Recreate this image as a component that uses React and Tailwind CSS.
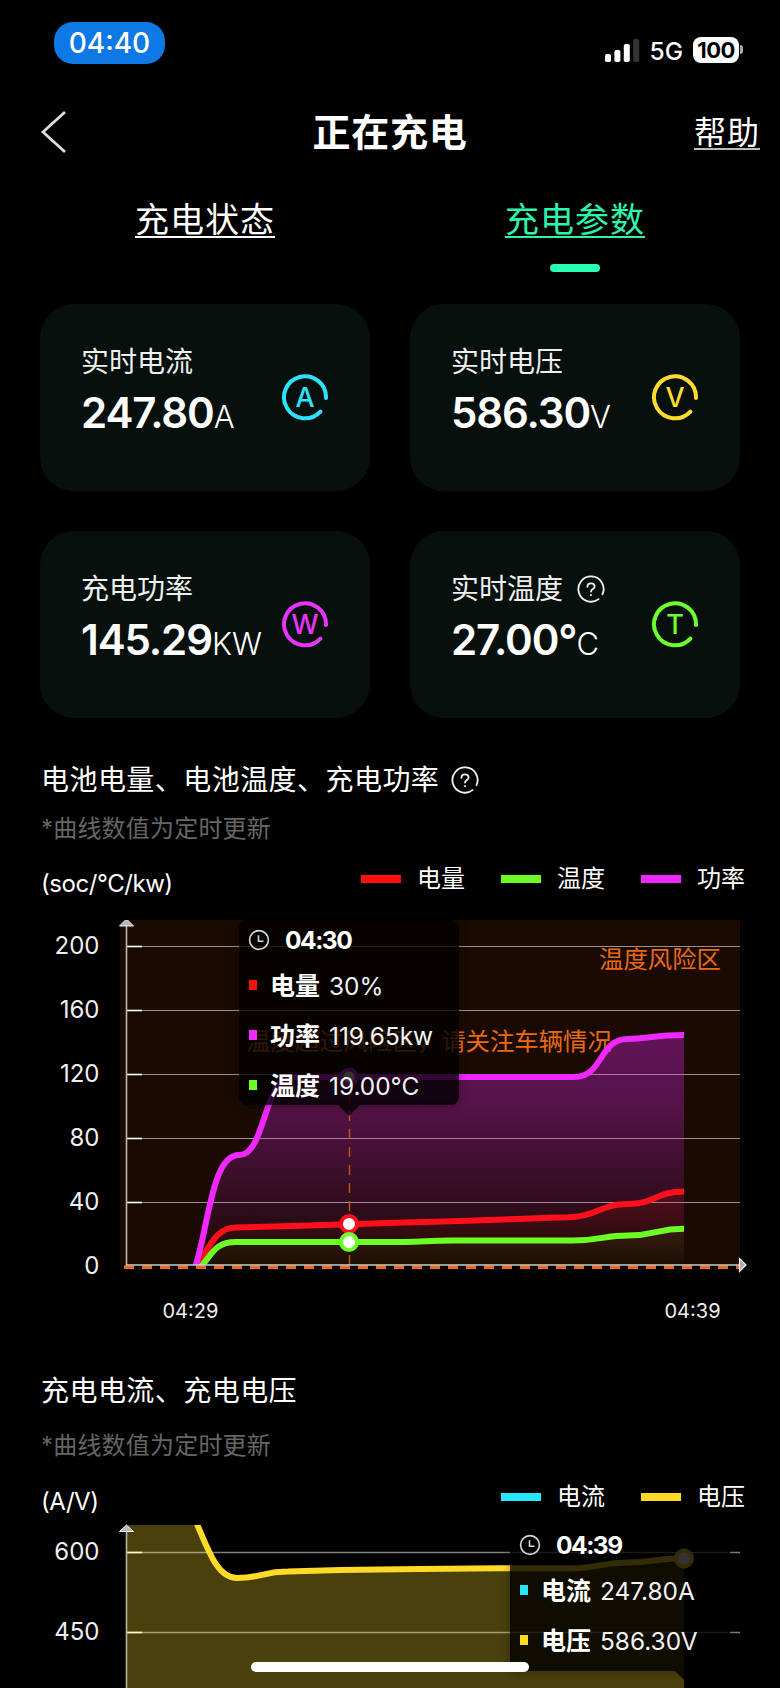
/**
 * App.jsx
 * ─────────────────────────────────────────────────────────────────────────────
 * Charging page: live parameters, battery chart, current / voltage chart
 * ─────────────────────────────────────────────────────────────────────────────
 */

const METRICS = [
  { label: "实时电流", value: "247.80", unit: "A", letter: "A", color: "#2be3fb" },
  { label: "实时电压", value: "586.30", unit: "V", letter: "V", color: "#fddc2c" },
  { label: "充电功率", value: "145.29", unit: "KW", letter: "W", color: "#e833fa" },
  { label: "实时温度", value: "27.00°", unit: "C", letter: "T", color: "#6dff2e", help: true },
];

const BATTERY_LEGEND = [
  { label: "电量", color: "bg-[#fd1008]" },
  { label: "温度", color: "bg-[#6cff26]" },
  { label: "功率", color: "bg-[#ee28ff]" },
];

const CURRENT_LEGEND = [
  { label: "电流", color: "bg-[#27e6ff]" },
  { label: "电压", color: "bg-[#ffdb27]" },
];

// Curves, in the coordinates of each chart's viewBox
const POWER = "M188 365 C209 325 208 235 239 235 C266 235 263 157 293 157 H574 C604 157 598 119 628 119 C646 119 656 115 684 115";
const SOC = "M189 357 C208 334 213 307 236 307.5 L292 306 L348 304.3 L404 302.5 L460 301 L516 299 L556 297.5 C600 298.5 597 284 628 284 C655 284 656 271.5 684 271.5";
const TEMP = "M194 355 C212 336 213 322 236 322 H404 C424 322 428 320.5 452 320.5 H572 C600 320.5 604 315.5 628 315.5 C656 315.5 656 308.8 684 308.8";
const VOLTAGE = "M126 -40 H170 C202 -10 206 58 237 58 C262 58 262 51.5 288 51.5 L340 50 L420 49 L500 48.2 H572 C596 48.2 604 42.5 628 42.5 C652 42.5 656 38.5 684 38.3";

// ── Icons ────────────────────────────────────────────────────────────────────
function HelpIcon() {
  return (
    <svg viewBox="0 0 28 28" className="h-7 w-7 flex-shrink-0" fill="none" stroke="#f2f2f2" strokeWidth="1.8" strokeLinecap="round">
      <path d="M25.5 19.2 A12.6 12.6 0 1 0 21.6 24.1" />
      <path d="M10.4 11.8 C10.4 7.2 17.6 7.2 17.6 11.8 C17.6 14.2 14 14 14 16.6" />
      <path d="M14 20v.2" />
    </svg>
  );
}

function ClockIcon() {
  return (
    <svg viewBox="0 0 22 22" className="h-[22px] w-[22px]" fill="none" stroke="#d8d8d8" strokeWidth="1.6">
      <circle cx="11" cy="11" r="9.4" />
      <path d="M10.5 6.2 V12.2 H15.5" />
    </svg>
  );
}

function MetricIcon({ letter, color }) {
  return (
    <div className="relative flex h-12 w-12 items-center justify-center">
      <svg viewBox="0 0 48 48" className="absolute inset-0 h-12 w-12" fill="none" stroke={color} strokeWidth="4" strokeLinecap="round">
        <path d="M45 25 A21 21 0 1 0 39.4 38.6" />
      </svg>
      <span className="text-[27px] font-medium leading-none" style={{ color }}>{letter}</span>
    </div>
  );
}

// ── Page pieces ──────────────────────────────────────────────────────────────
function StatusBar() {
  return (
    <div className="flex h-[84px] items-start justify-between pl-[54px] pr-[37px] pt-[22px]">
      <div className="flex h-[42px] w-[111px] items-center justify-center rounded-[19px] bg-[#0e78e4] text-[28px] font-medium">04:40</div>
      <div className="mt-[14px] flex h-[27px] items-center">
        <svg viewBox="0 0 35 23" className="mt-px h-[23px] w-[35px]" fill="#fff">
          <rect x="0" y="15" width="6" height="8" rx="1.8" />
          <rect x="9.4" y="11" width="6" height="12" rx="1.8" />
          <rect x="18.8" y="5" width="6" height="18" rx="1.8" />
          <rect x="28.2" y="0" width="6" height="23" rx="1.8" fill="#343434" />
        </svg>
        <span className="ml-[10px] mt-[3px] text-[24.5px] font-medium leading-none">5G</span>
        <div className="ml-[10px] flex h-[26px] w-[46px] items-center justify-center rounded-[8px] bg-white text-[22px] font-bold leading-none tracking-tight text-black">100</div>
        <div className="ml-px h-[9px] w-[3px] rounded-r-full bg-[#aaa]" />
      </div>
    </div>
  );
}

function MetricCard({ label, value, unit, letter, color, help }) {
  return (
    <div className="flex h-[187px] justify-between rounded-[34px] bg-[#08100e] pl-[41px] pr-[41px]">
      <div className="pt-[38px]">
        <div className="flex h-[40px] items-center text-[28px] text-[#edf0ef]">
          {label}
          {help && <span className="ml-[14px]"><HelpIcon /></span>}
        </div>
        <div className="flex items-baseline whitespace-nowrap pt-[5px] leading-[52px]">
          <span className="text-[42px] font-semibold tracking-[-1.1px]">{value}</span>
          <span className="text-[31px] font-light">{unit}</span>
        </div>
      </div>
      <div className="-ml-5 pt-[69px]">
        <MetricIcon letter={letter} color={color} />
      </div>
    </div>
  );
}

function Legend({ items }) {
  return (
    <div className="flex gap-9">
      {items.map((item) => (
        <div key={item.label} className="flex w-[104px] items-center justify-between">
          <span className={`h-2 w-10 ${item.color}`} />
          <span className="text-[24px] leading-[30px]">{item.label}</span>
        </div>
      ))}
    </div>
  );
}

function Tooltip({ time, rows }) {
  return (
    <div className="px-[9px] pt-[9px]">
      <div className="flex h-[22px] items-center">
        <ClockIcon />
        <span className="ml-[15px] text-[24.5px] font-bold leading-none tracking-[-0.06em]">{time}</span>
      </div>
      {rows.map((row) => (
        <div key={row.label} className="flex h-[50px] items-center whitespace-nowrap pl-px pt-[20px] leading-[30px]">
          <span className={`mb-[3px] h-[10px] w-2 ${row.color}`} />
          <span className="ml-[13px] text-[25px] font-bold">{row.label}</span>
          <span className="ml-[9px] text-[24.4px] text-[#f3f3f3]">{row.value}</span>
        </div>
      ))}
    </div>
  );
}

function BatteryChart() {
  return (
    <div className="relative h-[430px]">
      <svg viewBox="0 0 780 430" className="h-[430px] w-[780px]">
        <defs>
          <clipPath id="batteryPlot"><rect x="120" y="0" width="564" height="345" /></clipPath>
          <linearGradient id="powerFill" gradientUnits="userSpaceOnUse" x1="0" y1="115" x2="0" y2="345">
            <stop offset="0" stopColor="#ee28ff" stopOpacity="0.34" />
            <stop offset="0.3" stopColor="#ee28ff" stopOpacity="0.28" />
            <stop offset="1" stopColor="#ee28ff" stopOpacity="0" />
          </linearGradient>
          <linearGradient id="socFill" gradientUnits="userSpaceOnUse" x1="0" y1="271" x2="0" y2="345">
            <stop offset="0" stopColor="#fd1008" stopOpacity="0.14" />
            <stop offset="1" stopColor="#fd1008" stopOpacity="0" />
          </linearGradient>
          <linearGradient id="tempFill" gradientUnits="userSpaceOnUse" x1="0" y1="308" x2="0" y2="345">
            <stop offset="0" stopColor="#6cff26" stopOpacity="0.06" />
            <stop offset="1" stopColor="#6cff26" stopOpacity="0.02" />
          </linearGradient>
        </defs>

        <rect x="120" y="0" width="620" height="345" fill="#1a0a02" />
        {[200, 160, 120, 80, 40, 0].map((tick, i) => (
          <g key={tick}>
            {tick > 0 && <path d={`M126 ${26.5 + i * 64}H740`} stroke="#9d918b" strokeWidth="1.2" />}
            {tick > 0 && <path d={`M126 ${26.5 + i * 64}H142`} stroke="#fff" strokeWidth="1.6" />}
            <text x="99.5" y={34 + i * 64} textAnchor="end" fontSize="24" fill="#efefef">{tick}</text>
          </g>
        ))}
        <path d="M126.5 4V345" stroke="#bdb8b5" strokeWidth="1.6" />
        <path d="M126.5 -1L119.5 6H133.5Z" fill="#b9b9b9" stroke="#eee" strokeWidth="1" />
        <text x="599" y="48" fontSize="24.4" fill="#e96a12">温度风险区</text>
        <text x="246" y="129.5" fontSize="24.4" fill="#e96a12">温度超过风险区，请关注车辆情况</text>

        <g clipPath="url(#batteryPlot)" fill="none" strokeWidth="6">
          <path d={`${POWER}V345H180Z`} fill="url(#powerFill)" />
          <path d={`${SOC}V345H180Z`} fill="url(#socFill)" />
          <path d={`${TEMP}V345H180Z`} fill="url(#tempFill)" />
          <path d={SOC} stroke="#ff0f1b" />
          <path d={TEMP} stroke="#6cff26" />
          <path d={POWER} stroke="#ee28ff" />
        </g>

        {/* Selected time */}
        <path d="M349.5 345V156" stroke="#c4561c" strokeWidth="1.4" strokeDasharray="10 8" />
        <circle cx="349" cy="157" r="7.5" fill="#fff" stroke="#ee28ff" strokeWidth="4" />
        <circle cx="349" cy="304" r="8" fill="#fff" stroke="#ff0f1b" strokeWidth="4" />
        <circle cx="349" cy="322" r="8" fill="#fff" stroke="#6cff26" strokeWidth="4" />

        {/* Time axis */}
        <path d="M124 347.2H740" stroke="#ec6917" strokeWidth="3.8" strokeDasharray="10 8" />
        <path d="M126 345H740" stroke="#d0cbc8" strokeWidth="1.4" />
        <path d="M739.5 338.5V351.5L746 345Z" fill="#aaa" stroke="#f2f2f2" strokeWidth="1.2" />
        <text x="162.5" y="398" fontSize="20" fill="#eee">04:29</text>
        <text x="664.5" y="398" fontSize="20" fill="#eee">04:39</text>

        <path d="M338 185H360L349 196Z" fill="#000" fillOpacity="0.75" />
      </svg>
      <div className="absolute left-[239px] top-0 h-[185px] w-[220px] rounded-lg bg-black/80 shadow-[0_1px_8px_rgba(0,0,0,0.3)]">
        <Tooltip
          time="04:30"
          rows={[
            { label: "电量", value: "30%", color: "bg-[#fd1008]" },
            { label: "功率", value: "119.65kw", color: "bg-[#ee28ff]" },
            { label: "温度", value: "19.00°C", color: "bg-[#6cff26]" },
          ]}
        />
      </div>
    </div>
  );
}

function CurrentChart() {
  return (
    <div className="relative h-[163px]">
      <svg viewBox="0 0 780 168" className="h-[168px] w-[780px]">
        <defs>
          <clipPath id="currentPlot"><rect x="126" y="5" width="558" height="163" /></clipPath>
        </defs>
        <path d={`${VOLTAGE}V180H126Z`} fill="#4a400b" clipPath="url(#currentPlot)" />
        {[600, 450].map((tick, i) => (
          <g key={tick}>
            <path d={`M126 ${32.5 + i * 80}H740`} stroke="#fff" strokeOpacity="0.5" strokeWidth="1.3" />
            <path d={`M126 ${32.5 + i * 80}H142`} stroke="#fffbd0" strokeWidth="1.6" />
            <text x="99.5" y={40 + i * 80} textAnchor="end" fontSize="24" fill="#efefef">{tick}</text>
          </g>
        ))}
        <path d={VOLTAGE} fill="none" stroke="#ffdb27" strokeWidth="6" clipPath="url(#currentPlot)" />
        <circle cx="684" cy="38.5" r="8" fill="#fff" stroke="#ffdb27" strokeWidth="4" />
        <path d="M126.5 10V168" stroke="#b9b59e" strokeWidth="1.6" />
        <path d="M126.5 5L119.5 11.5H133.5Z" fill="#b9b9b9" stroke="#eee" strokeWidth="1" />
        <path d="M675 151H693L684 160Z" fill="#000" fillOpacity="0.78" />
      </svg>
      <div className="absolute left-[510px] top-[5px] h-[146px] w-[220px] rounded-sm bg-black/80 shadow-[0_1px_8px_rgba(0,0,0,0.3)]">
        <Tooltip
          time="04:39"
          rows={[
            { label: "电流", value: "247.80A", color: "bg-[#27e6ff]" },
            { label: "电压", value: "586.30V", color: "bg-[#ffdb27]" },
          ]}
        />
      </div>
    </div>
  );
}

export default function App() {
  return (
    <div className="relative h-[1688px] w-[780px] overflow-hidden bg-black font-['Inter','Noto_Sans_CJK_SC',sans-serif] text-white">
      <StatusBar />

      {/* ── Header ─────────────────────────────────────────────────────── */}
      <header className="grid h-[96px] grid-cols-3 items-center pl-[40px] pr-[20px]">
        <svg viewBox="0 0 28 44" className="h-11 w-7" fill="none" stroke="#ddd" strokeWidth="2.8">
          <path d="M25 2 L3 22 L25 42" />
        </svg>
        <h1 className="-ml-[20px] text-center text-[38px] font-bold tracking-[0.7px]">正在充电</h1>
        <a className="justify-self-end border-b-2 border-[#bbb] pt-1 text-[32px] leading-[30px] tracking-[1px]">帮助</a>
      </header>

      {/* ── Tabs ───────────────────────────────────────────────────────── */}
      <nav className="grid h-[124px] grid-cols-2 px-[20px] pt-[20px] text-[34px] leading-[33px] tracking-[1px]">
        <div className="flex flex-col items-center">
          <a className="border-b-2 border-white pt-[3px]">充电状态</a>
        </div>
        <div className="flex flex-col items-center text-[#2df5ab]">
          <a className="border-b-2 border-[#2df5ab] pt-[3px]">充电参数</a>
          <span className="mt-[26px] h-2 w-[50px] rounded-full bg-[#2bffb3]" />
        </div>
      </nav>

      {/* ── Live values ────────────────────────────────────────────────── */}
      <section className="grid grid-cols-2 gap-10 px-10">
        {METRICS.map((metric) => (
          <MetricCard key={metric.label} {...metric} />
        ))}
      </section>

      {/* ── Battery chart ──────────────────────────────────────────────── */}
      <section>
        <div className="h-[202px] pl-[41px] pr-[35px] pt-[42px]">
          <h2 className="flex h-[40px] items-center text-[28px] tracking-[0.45px]">
            电池电量、电池温度、充电功率
            <span className="ml-[12px]"><HelpIcon /></span>
          </h2>
          <p className="mt-[11px] text-[24px] leading-[36px] tracking-[0.2px] text-[#666]">*曲线数值为定时更新</p>
          <div className="mt-[16px] flex items-start justify-between">
            <span className="mt-[6px] text-[24px] leading-[30px] tracking-[-0.45px]">(soc/°C/kw)</span>
            <div className="pt-px"><Legend items={BATTERY_LEGEND} /></div>
          </div>
        </div>
        <BatteryChart />
      </section>

      {/* ── Current / voltage chart ────────────────────────────────────── */}
      <section>
        <div className="h-[170px] pl-[41px] pr-[35px] pt-[21px]">
          <h2 className="flex h-[40px] items-center text-[28px] tracking-[0.45px]">充电电流、充电电压</h2>
          <p className="mt-[17px] text-[24px] leading-[36px] tracking-[0.2px] text-[#666]">*曲线数值为定时更新</p>
          <div className="mt-[18px] flex items-start justify-between">
            <span className="mt-[5px] text-[24px] leading-[30px] tracking-[-0.45px]">(A/V)</span>
            <Legend items={CURRENT_LEGEND} />
          </div>
        </div>
        <CurrentChart />
      </section>

      {/* Home indicator */}
      <div className="absolute bottom-4 left-[251px] h-[10px] w-[278px] rounded-full bg-white" />
    </div>
  );
}
